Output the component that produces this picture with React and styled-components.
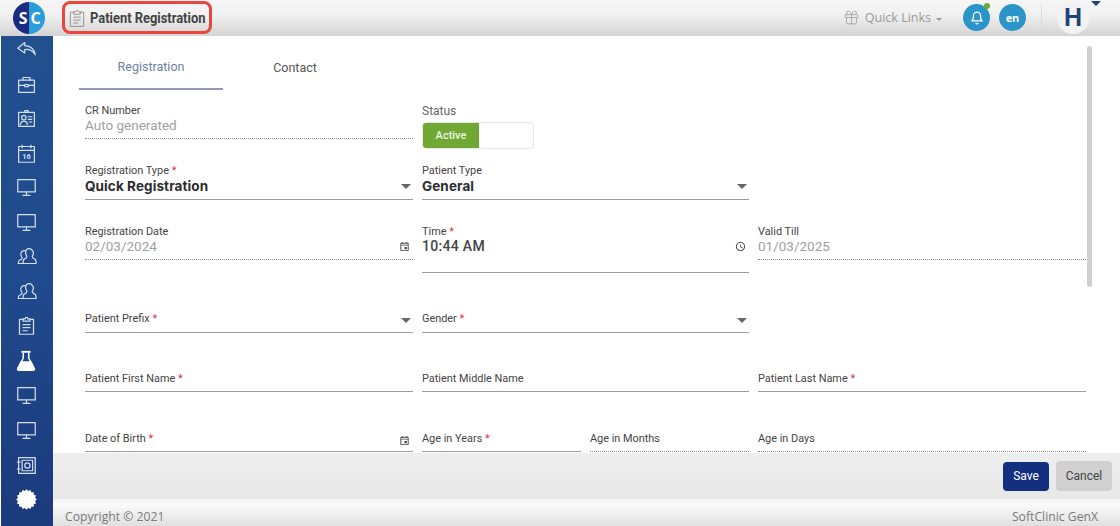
import React from "react";
import styled, { createGlobalStyle } from "styled-components";
import { MdAccessTime, MdOutlineEvent } from "react-icons/md";
import { LuBell, LuGift } from "react-icons/lu";

const GlobalStyle = createGlobalStyle`
    html, body {
        margin: 0;
        padding: 0;
        height: 100%;
        overflow: hidden;
        background: #fff;
    }
    * {
        box-sizing: border-box;
    }
    body {
        font-family: Roboto, "Liberation Sans", sans-serif;
    }
`;

const Page = styled.div`
    width: 1120px;
    height: 526px;
    display: flex;
    flex-direction: column;
    overflow: hidden;
`;

const Header = styled.header`
    height: 36px;
    flex: none;
    display: flex;
    align-items: center;
    padding-left: 13px;
    background: linear-gradient(#f6f6f6, #f1f1f1 40%, #d4d4d4);
`;

const Logo = styled.div`
    width: 32px;
    height: 32px;
    border-radius: 50%;
    display: flex;
    overflow: hidden;
    font: 700 16px "Open Sans", sans-serif;
    color: #fff;
`;

const LogoHalf = styled.span`
    width: 16px;
    display: flex;
    align-items: center;
    justify-content: ${(p) => (p.$right ? "flex-start" : "flex-end")};
    padding: 0 1.5px;
    background: ${(p) => (p.$right ? "#2a9ed8" : "#1c2a80")};
`;

const TitleBox = styled.div`
    margin: 0 0 1px 17px;
    width: 150px;
    height: 33px;
    border: 3px solid #e9463e;
    border-radius: 8px;
    display: flex;
    align-items: center;
    padding-left: 2px;
    gap: 3px;
`;

const TitleIcon = styled.span`
    display: flex;
    color: #8a8a8a;
`;

const Title = styled.h1`
    margin: 0;
    font: 700 15px Roboto, sans-serif;
    color: #444;
    white-space: nowrap;
    transform: scaleX(0.86);
    transform-origin: left center;
`;

const HeaderRight = styled.div`
    margin-left: auto;
    display: flex;
    align-items: center;
    height: 100%;
    position: relative;
    padding: 0 31px 1px 0;
`;

const QuickLinks = styled.div`
    display: flex;
    align-items: center;
    font: 400 12.5px "Open Sans", sans-serif;
    color: #9a9a9a;
    margin-right: 21px;
    svg {
        margin-right: 5px;
    }
`;

const SmallCaret = styled.span`
    width: 0;
    height: 0;
    margin: 3px 0 0 5px;
    border-left: 3px solid transparent;
    border-right: 3px solid transparent;
    border-top: 3px solid #999;
`;

const RoundButton = styled.div`
    width: 27px;
    height: 27px;
    margin-right: ${(p) => p.$mr || 0}px;
    border-radius: 50%;
    background: #2b94c9;
    color: #fff;
    display: flex;
    align-items: center;
    justify-content: center;
    position: relative;
    font: 700 11px "Open Sans", sans-serif;
`;

const GreenDot = styled.span`
    position: absolute;
    top: -1px;
    right: 0;
    width: 6px;
    height: 6px;
    border-radius: 50%;
    background: #6fa834;
`;

const Divider = styled.span`
    width: 1px;
    height: 28px;
    margin: 0 15px;
    background: #ddd;
`;

const Avatar = styled.div`
    width: 32px;
    height: 32px;
    border-radius: 50%;
    background: #f2f2f2;
    color: #1d4475;
    display: flex;
    align-items: center;
    justify-content: center;
    font: 700 25px "Liberation Sans", sans-serif;
`;

const AvatarCaret = styled.span`
    position: absolute;
    right: 19px;
    top: 1px;
    width: 0;
    height: 0;
    border-left: 5px solid transparent;
    border-right: 5px solid transparent;
    border-top: 5px solid #1d4475;
`;

const Body = styled.div`
    flex: 1;
    min-height: 0;
    display: flex;
`;

const Sidebar = styled.nav`
    width: 53px;
    flex: none;
    border-left: 1px solid #fff;
    background: linear-gradient(#22508f, #1f4a8d 50%, #1b3a7c);
    display: flex;
    flex-direction: column;
    align-items: center;
    gap: 13.55px;
    padding: 3px 2px 0 0;
    color: #d3deee;
    svg {
        flex: none;
    }
`;

const Main = styled.main`
    flex: 1;
    min-width: 0;
    display: flex;
    flex-direction: column;
`;

const Content = styled.div`
    flex: 1;
    min-height: 0;
    display: flex;
`;

const FormArea = styled.div`
    width: 1034px;
    overflow: hidden;
    flex: none;
`;

const ScrollThumb = styled.div`
    width: 5px;
    height: 241px;
    margin-top: 10px;
    border-radius: 3px;
    background: #cfcfcf;
`;

const Tabs = styled.div`
    display: flex;
    margin-left: 26px;
`;

const Tab = styled.div`
    width: 144px;
    height: 54px;
    display: flex;
    align-items: center;
    justify-content: center;
    padding-top: ${(p) => (p.$active ? 8 : 10)}px;
    font-size: 12.5px;
    color: ${(p) => (p.$active ? "#6f7fa3" : "#555")};
    border-bottom: 2px solid ${(p) => (p.$active ? "#8c9ab3" : "transparent")};
`;

const Form = styled.div`
    margin-top: 14px;
    padding-left: 32px;
`;

const Row = styled.div`
    height: ${(p) => p.$h}px;
    display: grid;
    grid-template-columns: 328px 327px 328px;
    column-gap: 9px;
    align-items: start;
`;

const Split = styled.div`
    display: grid;
    grid-template-columns: 159px 159px;
    column-gap: 9px;
`;

const Label = styled.label`
    display: block;
    padding-top: 1px;
    font-size: 10.9px;
    line-height: 12px;
    color: #444;
    white-space: nowrap;
`;

const StatusLabel = styled(Label)`
    font-size: 12px;
    color: #666;
`;

const Star = styled.span`
    color: #d9312c;
`;

const Control = styled.div`
    height: ${(p) => p.$h}px;
    display: flex;
    align-items: flex-start;
    justify-content: space-between;
    border-bottom: 1px ${(p) => (p.$dotted ? "dotted #8f8f8f" : "solid #9c9c9c")};
`;

const Muted = styled.span`
    font-size: 13.5px;
    line-height: 16px;
    color: #a0a0a0;
`;

const BoldValue = styled.span`
    font: 700 13.5px/18px Inter, sans-serif;
    color: #2c2c2c;
    letter-spacing: 0.1px;
`;

const TimeValue = styled.span`
    font: 500 14px/16px Roboto, sans-serif;
    color: #444;
    letter-spacing: 0.3px;
`;

const Arrow = styled.span`
    width: 0;
    height: 0;
    margin: ${(p) => p.$mt}px 2px 0 0;
    border-left: 5px solid transparent;
    border-right: 5px solid transparent;
    border-top: 5px solid #666;
`;

const EndIcon = styled.span`
    display: flex;
    color: #444;
    margin: 3px 3px 0 0;
`;

const Toggle = styled.div`
    width: 112px;
    height: 27px;
    margin-top: 5px;
    border: 1px solid #e6e6e6;
    border-radius: 4px;
    overflow: hidden;
    display: flex;
`;

const ToggleOn = styled.div`
    width: 56px;
    background: #6fa834;
    color: #eef6e4;
    display: flex;
    align-items: center;
    justify-content: center;
    font-size: 11px;
    font-weight: 500;
`;

const ActionBar = styled.div`
    height: 46px;
    flex: none;
    display: flex;
    align-items: center;
    justify-content: flex-end;
    gap: 7px;
    padding-right: 8px;
    background: linear-gradient(#eeeeee, #e8e8e8);
`;

const Button = styled.button`
    height: ${(p) => (p.$primary ? 29 : 30)}px;
    width: ${(p) => (p.$primary ? 46 : 56)}px;
    border: none;
    border-radius: 4px;
    padding: 0;
    font: 400 12px Roboto, sans-serif;
    color: ${(p) => (p.$primary ? "#fff" : "#444")};
    background: ${(p) => (p.$primary ? "#12307f" : "#d0d0d0")};
`;

const Footer = styled.footer`
    height: 27px;
    flex: none;
    display: flex;
    align-items: center;
    justify-content: space-between;
    padding: 7px 22px 0 12px;
    font: 400 12.2px "Open Sans", sans-serif;
    color: #7a7a7a;
    background: linear-gradient(#f2f2f2, #fafafa 20%, #e0e0e0);
`;

const Svg = ({ children, fill = "none", size = 21, sw = 1.4 }) => (
    <svg width={size} height={size} viewBox="0 0 24 24" fill={fill} stroke="currentColor" strokeWidth={sw} strokeLinejoin="round" strokeLinecap="round">
        {children}
    </svg>
);

const BackIcon = () => (
    <Svg>
        <path d="M10 4 2 10.500 10 16v-4c5-.5 9 1 12 6-1-6.500-5-10-12-10.500z" />
    </Svg>
);

const CaseIcon = () => (
    <Svg>
        <rect x="3" y="7" width="18" height="14" />
        <path d="M8 7V4h8v3M3 13h7M14 13h7M10 12h4v2.500h-4z" />
    </Svg>
);

const IdCardIcon = () => (
    <Svg>
        <path d="M3 5h18v16H3zM10 5V3h4v2" />
        <circle cx="9" cy="11" r="2.500" />
        <path d="M5 19c.5-3 2-4 4-4s3.500 1 4 4M14 10h4M14 13h4M15 16h3" />
    </Svg>
);

const CalendarIcon = () => (
    <svg width="21" height="21" viewBox="0 0 24 24" fill="none" stroke="currentColor" strokeWidth="1.4">
        <path d="M3 4h18v18H3zM3 8.500h18M7 2v4M17 2v4" />
        <text x="12" y="18.500" fontSize="8.500" fontWeight="700" textAnchor="middle" fill="currentColor" stroke="none" fontFamily="Roboto">16</text>
    </svg>
);

const MonitorIcon = () => (
    <Svg>
        <rect x="2" y="3" width="20" height="14" />
        <path d="M12 17v4M8 21h8" />
    </Svg>
);

const PeopleIcon = () => (
    <Svg>
        <path d="M15 3c-2.500 0-4 2-4 4.500 0 2 1 3.500 1.500 4.500 0 1.500-.5 2-3 3-1.500.5-1.500 2-1.500 5h15c0-3 0-4.500-1.500-5-2.500-1-3-1.500-3-3 .5-1 1.500-2.500 1.500-4.500C19 5 17.500 3 15 3z" />
        <path d="M10.500 5.500C8 4.500 5.500 6.500 5.500 9.500c0 1.500.5 3 1.500 4 0 1.500-1 2-2.500 2.500-1.500.5-2 2-2 4H8" />
    </Svg>
);

const ClipboardIcon = ({ size = 21, sw }) => (
    <Svg size={size} sw={sw}>
        <path d="M8 5H4v17h16V5h-4" />
        <path d="M8 7V4.500h2.500C10.500 2 13.500 2 13.500 4.500H16V7zM8 11h8M8 14.500h8M8 18h5" />
    </Svg>
);

const FlaskIcon = () => (
    <svg width="22" height="22" viewBox="0 0 24 24" fill="#fff" stroke="#fff" strokeWidth="1.6" strokeLinejoin="round">
        <path d="M7 2h10" fill="none" strokeWidth="2" />
        <path d="M9 3v6L3 20c-.6 1.200 0 2 1 2h16c1 0 1.600-.8 1-2L15 9V3" fill="none" />
        <path d="M6.500 13h11l3 7.500c.2.700-.2 1.500-1 1.500h-15c-.8 0-1.200-.8-1-1.500z" />
    </svg>
);

const SafeIcon = () => (
    <Svg>
        <rect x="3" y="3" width="19" height="18" />
        <rect x="7" y="6" width="12" height="12" />
        <circle cx="13" cy="12" r="3" />
        <path d="M1.500 8H5M1.500 16H5" />
    </Svg>
);

const burst = Array.from({ length: 32 }, (_, i) => {
    const r = i % 2 ? 10 : 11.800;
    const a = (i * Math.PI) / 16;
    return `${(12 + r * Math.cos(a)).toFixed(2)},${(12 + r * Math.sin(a)).toFixed(2)}`;
}).join(" ");

const BurstIcon = () => (
    <svg width="21" height="21" viewBox="0 0 24 24" fill="#fff">
        <polygon points={burst} />
    </svg>
);

const navIcons = [
    BackIcon, CaseIcon, IdCardIcon, CalendarIcon, MonitorIcon, MonitorIcon, PeopleIcon,
    PeopleIcon, ClipboardIcon, FlaskIcon, MonitorIcon, MonitorIcon, SafeIcon, BurstIcon,
];

export default function App() {
    return (
        <Page>
            <GlobalStyle />
            <Header>
                <Logo>
                    <LogoHalf>S</LogoHalf>
                    <LogoHalf $right>C</LogoHalf>
                </Logo>
                <TitleBox>
                    <TitleIcon><ClipboardIcon size={20} sw={1.1} /></TitleIcon>
                    <Title>Patient Registration</Title>
                </TitleBox>
                <HeaderRight>
                    <QuickLinks>
                        <LuGift size={17} strokeWidth={1.1} />
                        Quick Links
                        <SmallCaret />
                    </QuickLinks>
                    <RoundButton $mr={9}>
                        <LuBell size={14} strokeWidth={2.2} />
                        <GreenDot />
                    </RoundButton>
                    <RoundButton>en</RoundButton>
                    <Divider />
                    <Avatar>H</Avatar>
                    <AvatarCaret />
                </HeaderRight>
            </Header>
            <Body>
                <Sidebar>
                    {navIcons.map((NavIcon, i) => (
                        <NavIcon key={i} />
                    ))}
                </Sidebar>
                <Main>
                    <Content>
                        <FormArea>
                            <Tabs>
                                <Tab $active>Registration</Tab>
                                <Tab>Contact</Tab>
                            </Tabs>
                            <Form>
                                <Row $h={60}>
                                    <div>
                                        <Label>CR Number</Label>
                                        <Control $h={22} $dotted><Muted>Auto generated</Muted></Control>
                                    </div>
                                    <div>
                                        <StatusLabel>Status</StatusLabel>
                                        <Toggle><ToggleOn>Active</ToggleOn></Toggle>
                                    </div>
                                </Row>
                                <Row $h={61}>
                                    <div>
                                        <Label>Registration Type <Star>*</Star></Label>
                                        <Control $h={23}><BoldValue>Quick Registration</BoldValue><Arrow $mt={7} /></Control>
                                    </div>
                                    <div>
                                        <Label>Patient Type</Label>
                                        <Control $h={23}><BoldValue>General</BoldValue><Arrow $mt={7} /></Control>
                                    </div>
                                </Row>
                                <Row $h={87}>
                                    <div>
                                        <Label>Registration Date</Label>
                                        <Control $h={22} $dotted><Muted>02/03/2024</Muted><EndIcon><MdOutlineEvent size={11} /></EndIcon></Control>
                                    </div>
                                    <div>
                                        <Label>Time <Star>*</Star></Label>
                                        <Control $h={35}><TimeValue>10:44 AM</TimeValue><EndIcon><MdAccessTime size={11} /></EndIcon></Control>
                                    </div>
                                    <div>
                                        <Label>Valid Till</Label>
                                        <Control $h={22} $dotted><Muted>01/03/2025</Muted></Control>
                                    </div>
                                </Row>
                                <Row $h={60}>
                                    <Control $h={21}><Label>Patient Prefix <Star>*</Star></Label><Arrow $mt={6} /></Control>
                                    <Control $h={21}><Label>Gender <Star>*</Star></Label><Arrow $mt={6} /></Control>
                                </Row>
                                <Row $h={60}>
                                    <Control $h={20}><Label>Patient First Name <Star>*</Star></Label></Control>
                                    <Control $h={20}><Label>Patient Middle Name</Label></Control>
                                    <Control $h={20}><Label>Patient Last Name <Star>*</Star></Label></Control>
                                </Row>
                                <Row $h={30}>
                                    <Control $h={20}><Label>Date of Birth <Star>*</Star></Label><EndIcon><MdOutlineEvent size={11} /></EndIcon></Control>
                                    <Split>
                                        <Control $h={20}><Label>Age in Years <Star>*</Star></Label></Control>
                                        <Control $h={20} $dotted><Label>Age in Months</Label></Control>
                                    </Split>
                                    <Control $h={20} $dotted><Label>Age in Days</Label></Control>
                                </Row>
                            </Form>
                        </FormArea>
                        <ScrollThumb />
                    </Content>
                    <ActionBar>
                        <Button $primary>Save</Button>
                        <Button>Cancel</Button>
                    </ActionBar>
                    <Footer>
                        <span>Copyright © 2021</span>
                        <span>SoftClinic GenX</span>
                    </Footer>
                </Main>
            </Body>
        </Page>
    );
}
